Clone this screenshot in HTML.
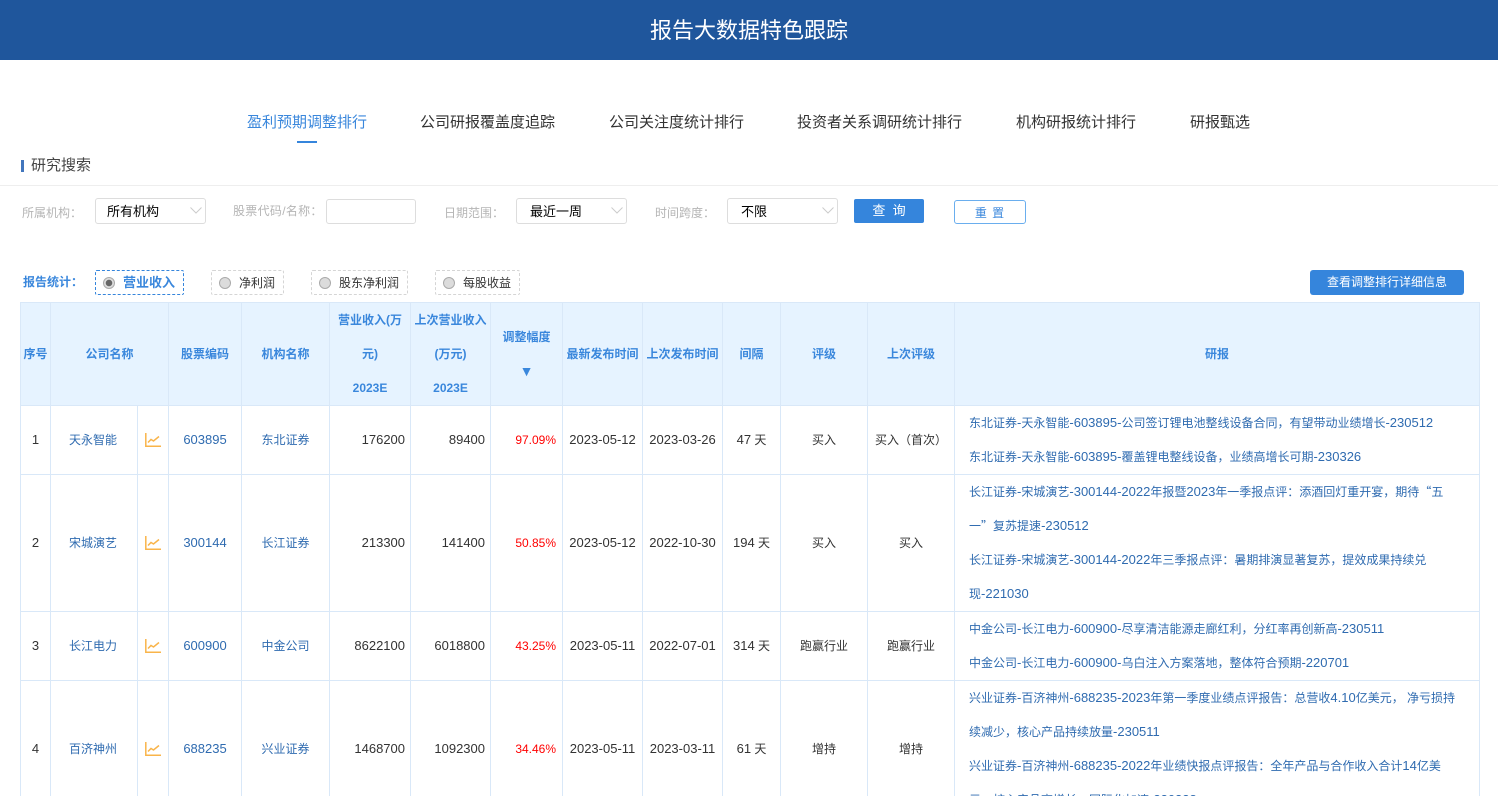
<!DOCTYPE html>
<html lang="zh-CN"><head><meta charset="utf-8"><title>报告大数据特色跟踪</title>
<style>
*{box-sizing:border-box}
html,body{margin:0;padding:0;width:1498px;height:796px;overflow:hidden;background:#fff}
body{position:relative;font-family:"Liberation Sans","Noto Sans CJK SC",sans-serif;font-size:12px;color:#333}
.a{position:absolute;white-space:nowrap}
.hd{left:0;top:0;width:1498px;height:60px;background:#1f569c;color:#fff;font-size:22px;line-height:61px;text-align:center}
.tab{top:113px;font-size:15px;line-height:20px;color:#333}
.lb{color:#b5b5b5;font-size:12px;line-height:16px}
.sel{height:26px;border:1px solid #ddd;border-radius:3px;background:#fff;color:#000;font-size:13px;line-height:25px;padding-left:11px}
.sel svg{position:absolute;right:3px;top:8px}
.rad{height:25px;top:270px;border:1px dashed #d5d5d5;border-radius:2px;line-height:24px;font-size:12px;color:#333}
.dot{position:absolute;top:6px;left:7px;width:12px;height:12px;border-radius:50%;background:#dcdcdc;border:1px solid #aaa}
.rad span.t{position:absolute;top:0}
table{position:absolute;left:20px;top:302px;width:1460px;border-collapse:collapse;table-layout:fixed;font-size:12px}
th,td{border:1px solid #d9e8f8;padding:0;text-align:center;vertical-align:middle;white-space:nowrap;overflow:hidden}
th{background:#e6f3ff;color:#3a87dc;font-weight:bold;line-height:34px;height:103px}
td{line-height:34px;color:#333}
td.l{color:#2f6bb0}
td.c{padding-right:2px}
td.r{text-align:right;padding-right:5px}
td.red{color:#f00;text-align:right;padding-right:6px}
td.rp{text-align:left;padding-left:14px;color:#2f6bb0}
td svg{display:block;margin:0 auto}
i{font-style:normal;font-size:13px}
u{text-decoration:none;font-family:"Noto Sans CJK SC",sans-serif}
</style></head><body>
<div class="a hd">报告大数据特色跟踪</div>

<div class="a tab" style="left:247px;color:#3a87dc">盈利预期调整排行</div>
<div class="a" style="left:297px;top:141px;width:20px;height:2px;background:#3585dc"></div>
<div class="a tab" style="left:420px">公司研报覆盖度追踪</div>
<div class="a tab" style="left:609px">公司关注度统计排行</div>
<div class="a tab" style="left:797px">投资者关系调研统计排行</div>
<div class="a tab" style="left:1016px">机构研报统计排行</div>
<div class="a tab" style="left:1190px">研报甄选</div>

<div class="a" style="left:21px;top:160px;width:3px;height:12px;background:#4276bd"></div>
<div class="a" style="left:31px;top:156px;font-size:15px;line-height:20px;color:#444">研究搜索</div>
<div class="a" style="left:0;top:185px;width:1498px;height:1px;background:#eee"></div>

<div class="a lb" style="left:22px;top:205px">所属机构：</div>
<div class="a sel" style="left:95px;top:198px;width:111px">所有机构<svg width="12" height="8"><path d="M.5.5L6 6l5.500-5.500" fill="none" stroke="#ccc"/></svg></div>
<div class="a lb" style="left:233px;top:203px;letter-spacing:.3px">股票代码/名称：</div>
<div class="a" style="left:326px;top:199px;width:90px;height:25px;border:1px solid #ddd;border-radius:3px"></div>
<div class="a lb" style="left:444px;top:205px">日期范围：</div>
<div class="a sel" style="left:516px;top:198px;width:111px;padding-left:13px">最近一周<svg width="12" height="8"><path d="M.5.5L6 6l5.500-5.500" fill="none" stroke="#ccc"/></svg></div>
<div class="a lb" style="left:655px;top:205px">时间跨度：</div>
<div class="a sel" style="left:727px;top:198px;width:111px;padding-left:13px">不限<svg width="12" height="8"><path d="M.5.5L6 6l5.500-5.500" fill="none" stroke="#ccc"/></svg></div>
<div class="a" style="left:854px;top:199px;width:70px;height:24px;background:#3585dc;border-radius:2px;color:#fff;text-align:center;line-height:24px;font-size:13px">查&nbsp;&nbsp;询</div>
<div class="a" style="left:954px;top:200px;width:72px;height:24px;border:1px solid #6aaeee;border-radius:3px;color:#3a87dc;text-align:center;line-height:24px;font-size:12px;letter-spacing:1px">重&nbsp;置</div>

<div class="a" style="left:23px;top:274px;font-weight:bold;color:#3a87dc;line-height:16px">报告统计：</div>
<div class="a rad" style="left:95px;width:89px;border-color:#3585dc;color:#3a87dc;font-size:13px;font-weight:bold"><i class="dot" style="background:radial-gradient(circle,#666 0 3px,#ddd 3.5px)"></i><span class="t" style="left:27px">营业收入</span></div>
<div class="a rad" style="left:211px;width:73px"><i class="dot"></i><span class="t" style="left:27px">净利润</span></div>
<div class="a rad" style="left:311px;width:97px"><i class="dot"></i><span class="t" style="left:27px">股东净利润</span></div>
<div class="a rad" style="left:435px;width:85px"><i class="dot"></i><span class="t" style="left:27px">每股收益</span></div>
<div class="a" style="left:1310px;top:270px;width:154px;height:25px;background:#3585dc;border-radius:3px;color:#fff;text-align:center;line-height:24px;font-size:12px">查看调整排行详细信息</div>

<table>
<colgroup><col style="width:30px"><col style="width:87px"><col style="width:31px"><col style="width:73px"><col style="width:88px"><col style="width:81px"><col style="width:80px"><col style="width:72px"><col style="width:80px"><col style="width:80px"><col style="width:58px"><col style="width:87px"><col style="width:87px"><col style="width:525px"></colgroup>
<tr>
<th>序号</th><th colspan="2">公司名称</th><th>股票编码</th><th>机构名称</th>
<th>营业收入(万<br>元)<br>2023E</th><th>上次营业收入<br>(万元)<br>2023E</th>
<th>调整幅度<br><span style="font-size:14px">▼</span></th>
<th>最新发布时间</th><th>上次发布时间</th><th>间隔</th><th>评级</th><th>上次评级</th><th>研报</th>
</tr>
<tr style="height:69px">
<td><i>1</i></td><td class="l c">天永智能</td><td><svg width="16" height="14" viewBox="0 0 16 14"><path d="M.8 0v13.200H16M3 9.500l3-3 2.500 1.500L14 3.500" fill="none" stroke="#f9b44a" stroke-width="1.500"/></svg></td><td class="l"><i>603895</i></td><td class="l">东北证券</td><td class="r"><i>176200</i></td><td class="r"><i>89400</i></td><td class="red">97.09%</td><td><i>2023-05-12</i></td><td><i>2023-03-26</i></td><td><i>47</i> 天</td><td>买入</td><td>买入（首次）</td>
<td class="rp">东北证券<i>-</i>天永智能<i>-603895-</i>公司签订锂电池整线设备合同，有望带动业绩增长<i>-230512</i><br>东北证券<i>-</i>天永智能<i>-603895-</i>覆盖锂电整线设备，业绩高增长可期<i>-230326</i></td>
</tr>
<tr style="height:137px">
<td><i>2</i></td><td class="l c">宋城演艺</td><td><svg width="16" height="14" viewBox="0 0 16 14"><path d="M.8 0v13.200H16M3 9.500l3-3 2.500 1.500L14 3.500" fill="none" stroke="#f9b44a" stroke-width="1.500"/></svg></td><td class="l"><i>300144</i></td><td class="l">长江证券</td><td class="r"><i>213300</i></td><td class="r"><i>141400</i></td><td class="red">50.85%</td><td><i>2023-05-12</i></td><td><i>2022-10-30</i></td><td><i>194</i> 天</td><td>买入</td><td>买入</td>
<td class="rp">长江证券<i>-</i>宋城演艺<i>-300144-2022</i>年报暨<i>2023</i>年一季报点评：添酒回灯重开宴，期待<u>“</u>五<br>一<u>”</u>复苏提速<i>-230512</i><br>长江证券<i>-</i>宋城演艺<i>-300144-2022</i>年三季报点评：暑期排演显著复苏，提效成果持续兑<br>现<i>-221030</i></td>
</tr>
<tr style="height:69px">
<td><i>3</i></td><td class="l c">长江电力</td><td><svg width="16" height="14" viewBox="0 0 16 14"><path d="M.8 0v13.200H16M3 9.500l3-3 2.500 1.500L14 3.500" fill="none" stroke="#f9b44a" stroke-width="1.500"/></svg></td><td class="l"><i>600900</i></td><td class="l">中金公司</td><td class="r"><i>8622100</i></td><td class="r"><i>6018800</i></td><td class="red">43.25%</td><td><i>2023-05-11</i></td><td><i>2022-07-01</i></td><td><i>314</i> 天</td><td>跑赢行业</td><td>跑赢行业</td>
<td class="rp">中金公司<i>-</i>长江电力<i>-600900-</i>尽享清洁能源走廊红利，分红率再创新高<i>-230511</i><br>中金公司<i>-</i>长江电力<i>-600900-</i>乌白注入方案落地，整体符合预期<i>-220701</i></td>
</tr>
<tr style="height:137px">
<td><i>4</i></td><td class="l c">百济神州</td><td><svg width="16" height="14" viewBox="0 0 16 14"><path d="M.8 0v13.200H16M3 9.500l3-3 2.500 1.500L14 3.500" fill="none" stroke="#f9b44a" stroke-width="1.500"/></svg></td><td class="l"><i>688235</i></td><td class="l">兴业证券</td><td class="r"><i>1468700</i></td><td class="r"><i>1092300</i></td><td class="red">34.46%</td><td><i>2023-05-11</i></td><td><i>2023-03-11</i></td><td><i>61</i> 天</td><td>增持</td><td>增持</td>
<td class="rp">兴业证券<i>-</i>百济神州<i>-688235-2023</i>年第一季度业绩点评报告：总营收<i>4.10</i>亿美元， 净亏损持<br>续减少，核心产品持续放量<i>-230511</i><br>兴业证券<i>-</i>百济神州<i>-688235-2022</i>年业绩快报点评报告：全年产品与合作收入合计<i>14</i>亿美<br>元，核心产品高增长，国际化加速<i>-230228</i></td>
</tr>
</table>
</body></html>
